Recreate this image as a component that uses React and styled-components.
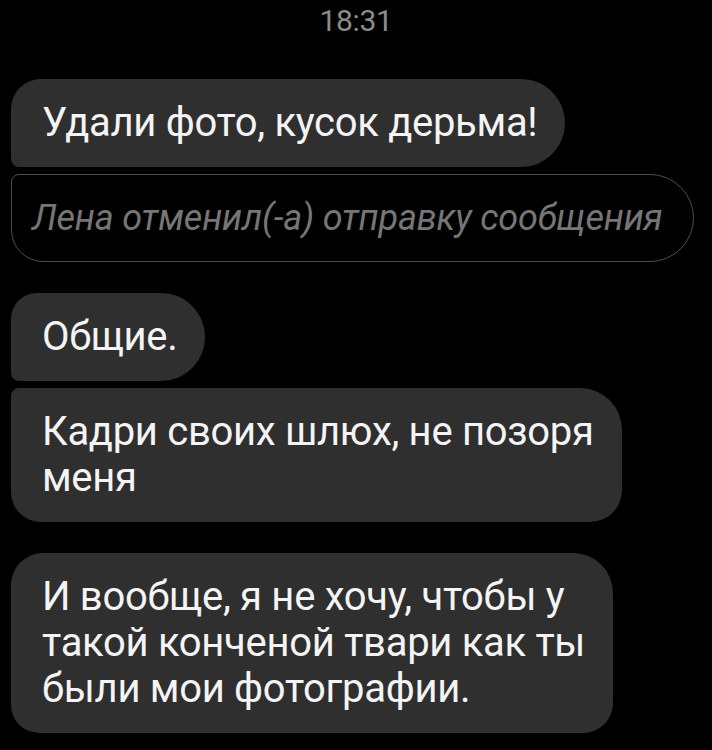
import React from "react";
import styled, { createGlobalStyle } from "styled-components";

const GlobalStyle = createGlobalStyle`
  html, body {
    margin: 0;
    padding: 0;
    background: #000;
  }
  body {
    font-family: Roboto, "Noto Sans", sans-serif;
  }
`;

const Screen = styled.div`
  width: 712px;
  height: 750px;
  overflow: hidden;
  background: #000;
  display: flex;
  flex-direction: column;
  padding: 0 0 0 11px;
  box-sizing: border-box;
`;

const Time = styled.div`
  align-self: center;
  margin: 3px 0 0 -11px;
  font-size: 30px;
  line-height: 36px;
  color: #8c8c8c;
  letter-spacing: -0.3px;
`;

const Group = styled.div`
  display: flex;
  flex-direction: column;
  align-items: flex-start;
  gap: 7px;
  margin-top: ${(p) => p.$top}px;
`;

const Bubble = styled.div`
  box-sizing: border-box;
  padding: 21px 28px 21px 31px;
  font-size: 40px;
  line-height: 46px;
  color: #f4f4f4;
  background: #2f2f2f;
  letter-spacing: -0.3px;
  border-radius: ${(p) => p.$radius};
  white-space: nowrap;
`;

const Retracted = styled(Bubble)`
  background: transparent;
  border: 1.5px solid #4e4e4e;
  padding: 20px 30px 20px 20px;
  color: #767676;
  font-style: italic;
  font-size: 36px;
  letter-spacing: -0.2px;
`;

const Message = ({ lines, radius }) => (
  <Bubble $radius={radius}>
    {lines.map((line, i) => (
      <React.Fragment key={i}>
        {i > 0 && <br />}
        {line}
      </React.Fragment>
    ))}
  </Bubble>
);

export default function App() {
  return (
    <>
      <GlobalStyle />
      <Screen>
        <Time>18:31</Time>
        <Group $top={40}>
          <Message
            lines={["Удали фото, кусок дерьма!"]}
            radius="30px 44px 44px 8px"
          />
          <Retracted $radius="8px 44px 44px 32px">
            Лена отменил(-а) отправку сообщения
          </Retracted>
        </Group>
        <Group $top={31}>
          <Message lines={["Общие."]} radius="26px 44px 44px 8px" />
          <Message
            lines={["Кадри своих шлюх, не позоря", "меня"]}
            radius="8px 42px 32px 30px"
          />
        </Group>
        <Group $top={31}>
          <Message
            lines={[
              "И вообще, я не хочу, чтобы у",
              "такой конченой твари как ты",
              "были мои фотографии.",
            ]}
            radius="32px 40px 30px 28px"
          />
        </Group>
      </Screen>
    </>
  );
}
